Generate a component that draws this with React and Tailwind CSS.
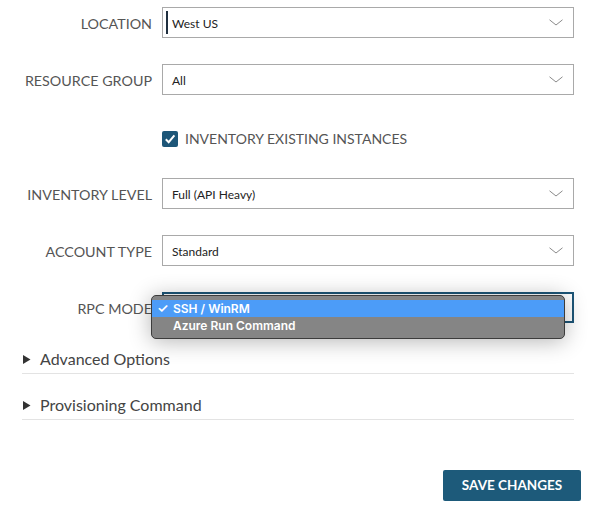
import React from "react";

function Chevron() {
  return (
    <svg width="14" height="7" viewBox="0 0 14 7" className="shrink-0">
      <path d="M0.5 0.8 L7 6 L13.5 0.8" fill="none" stroke="#8a8a8a" strokeWidth="1" />
    </svg>
  );
}

function Select({ value, caret, focused }) {
  return (
    <div
      className={
        "relative flex h-[31px] flex-1 items-center justify-between bg-white pl-[9px] pr-[10px] " +
        (focused ? "border-2 border-[#1d5678]" : "border border-[#a9a9a9]")
      }
    >
      {caret && <div className="absolute left-[3px] top-[3px] h-[23px] w-[2px] bg-[#1f2f3f]" />}
      <span className="mt-[2px] text-[12px] text-[#222]">{value}</span>
      <Chevron />
    </div>
  );
}

function Row({ label, children }) {
  return (
    <div className="flex h-[31px] items-center">
      <div className="mt-[2px] w-[130px] shrink-0 whitespace-nowrap text-right text-[14.3px] text-[#555]">{label}</div>
      <div className="ml-[10px] flex flex-1">{children}</div>
    </div>
  );
}

function Section({ title, className }) {
  return (
    <div className={"flex items-center border-b border-[#e3e3e3] pb-[4px] " + className}>
      <svg width="8" height="9" viewBox="0 0 8 9" className="ml-[1px]">
        <path d="M0 0 L7.5 4.5 L0 9 Z" fill="#333" />
      </svg>
      <span className="ml-[9px] text-[16px] leading-[20px] text-[#444]">{title}</span>
    </div>
  );
}

export default function App() {
  return (
    <div
      className="relative h-[517px] w-[596px] bg-white"
      style={{ fontFamily: "Lato, 'Noto Sans', sans-serif" }}
    >
      <div className="flex flex-col gap-[26px] pl-[22px] pr-[22px] pt-[7px]">
        <Row label="LOCATION">
          <Select value="West US" caret />
        </Row>
        <Row label="RESOURCE GROUP">
          <Select value="All" />
        </Row>
        <div className="flex h-[31px] items-center pl-[140px]">
          <div className="mt-[4px] flex h-[16px] w-[16px] items-center justify-center rounded-[2px] bg-[#1d5678]">
            <svg width="12" height="12" viewBox="0 0 12 12">
              <path d="M1.8 6.2 L4.7 9.2 L10.4 2.4" fill="none" stroke="white" strokeWidth="2" />
            </svg>
          </div>
          <span className="ml-[7px] mt-[3px] text-[14px] text-[#555]">INVENTORY EXISTING INSTANCES</span>
        </div>
        <Row label="INVENTORY LEVEL">
          <Select value="Full (API Heavy)" />
        </Row>
        <Row label="ACCOUNT TYPE">
          <Select value="Standard" />
        </Row>
        <Row label="RPC MODE">
          <Select value="" focused />
        </Row>
      </div>

      <div className="px-[22px]">
        <Section title="Advanced Options" className="mt-[26px]" />
        <Section title="Provisioning Command" className="mt-[21px]" />
      </div>

      <div className="mt-[50px] flex justify-end pr-[15px]">
        <button className="h-[31px] w-[138px] rounded-[2px] bg-[#1d5a7a] text-[13.5px] font-bold text-white">
          SAVE CHANGES
        </button>
      </div>

      <div
        className="absolute left-[151px] top-[295px] w-[414px] rounded-[5px] border border-[#3c3c3c] bg-[#858585] py-[4px] shadow-[0_2px_22px_rgba(0,0,0,0.3)]"
        style={{ fontFamily: "Inter, 'Liberation Sans', sans-serif" }}
      >
        <div className="flex h-[17px] items-center bg-[#4c9cf8] text-[12px] font-semibold text-white">
          <span className="ml-[5px] w-[16px] text-[13px]">✓</span>
          <span>SSH / WinRM</span>
        </div>
        <div className="flex h-[17px] items-center text-[12px] font-semibold text-white">
          <span className="ml-[5px] w-[16px]"></span>
          <span>Azure Run Command</span>
        </div>
      </div>
    </div>
  );
}
